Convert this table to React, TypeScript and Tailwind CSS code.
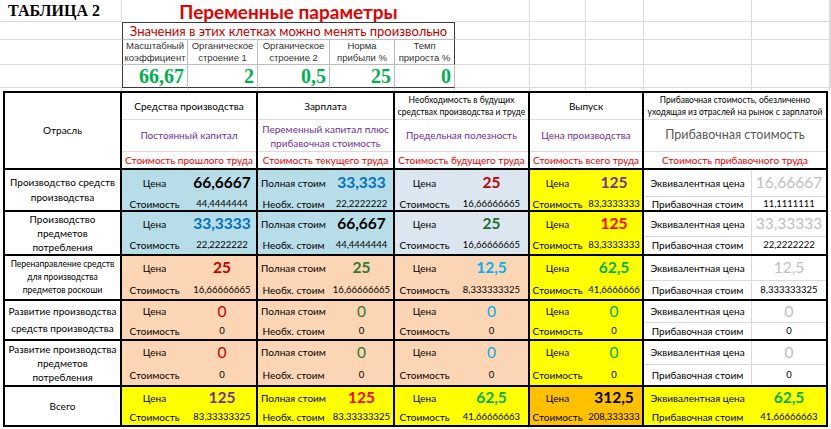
import React from 'react'

type Grp = {
  bg: string
  l1: string
  l2: string
  v1: string
  v1c: string
  v2: string
  lines?: boolean
}

const SPLITS = [
  'grid-cols-[66px_1fr]',
  'grid-cols-[72px_1fr]',
  'grid-cols-[60px_1fr]',
  'grid-cols-[56px_1fr]',
  'grid-cols-[108px_1fr]',
]

const C = 'Цена'
const S = 'Стоимость'
const PS = 'Полная стоим'
const NS = 'Необх. стоим'
const EQ = 'Эквивалентная цена'
const PR = 'Прибавочная стоим'

const BLUE = 'bg-[#b7dee8]'
const PALE = 'bg-[#dce6f1]'
const PEACH = 'bg-[#fcd5b4]'
const YEL = 'bg-[#ffff00]'
const ORG = 'bg-[#ffc000]'
const WHITE = 'bg-white'

const rows: { label: React.ReactNode; labelCls: string; top: string; h: string; groups: Grp[] }[] = [
  {
    label: <>Производство средств<br />производства</>,
    labelCls: 'text-[10px] leading-[15px]',
    top: 'grid-rows-[27px_1fr]',
    h: 'h-[42px]',
    groups: [
      { bg: BLUE, l1: C, l2: S, v1: '66,6667', v1c: 'font-bold text-black', v2: '44,4444444' },
      { bg: BLUE, l1: PS, l2: NS, v1: '33,333', v1c: 'font-bold text-[#0070c0]', v2: '22,2222222' },
      { bg: PALE, l1: C, l2: S, v1: '25', v1c: 'font-bold text-[#c00000]', v2: '16,66666665' },
      { bg: YEL, l1: C, l2: S, v1: '125', v1c: 'font-bold text-[#7030a0]', v2: '83,3333333' },
      { bg: WHITE, l1: EQ, l2: PR, v1: '16,66667', v1c: 'text-[#bfbfbf]', v2: '11,1111111', lines: true },
    ],
  },
  {
    label: <>Производство<br />предметов<br />потребления</>,
    labelCls: 'text-[10px] leading-[14px]',
    top: 'grid-rows-[25px_1fr]',
    h: 'h-[44px]',
    groups: [
      { bg: BLUE, l1: C, l2: S, v1: '33,3333', v1c: 'font-bold text-[#0070c0]', v2: '22,2222222' },
      { bg: BLUE, l1: PS, l2: NS, v1: '66,667', v1c: 'font-bold text-black', v2: '44,4444444' },
      { bg: PALE, l1: C, l2: S, v1: '25', v1c: 'font-bold text-[#1e6b2a]', v2: '16,66666665' },
      { bg: YEL, l1: C, l2: S, v1: '125', v1c: 'font-bold text-[#ff0000]', v2: '83,3333333' },
      { bg: WHITE, l1: EQ, l2: PR, v1: '33,33333', v1c: 'text-[#bfbfbf]', v2: '22,2222222', lines: true },
    ],
  },
  {
    label: <>Перенаправление средств<br />для производства<br />предметов роскоши</>,
    labelCls: 'text-[8.5px] leading-[13px]',
    top: 'grid-rows-[25px_1fr]',
    h: 'h-[45px]',
    groups: [
      { bg: PEACH, l1: C, l2: S, v1: '25', v1c: 'font-bold text-[#c00000]', v2: '16,66666665' },
      { bg: PEACH, l1: PS, l2: NS, v1: '25', v1c: 'font-bold text-[#2f7a2a]', v2: '16,66666665' },
      { bg: PEACH, l1: C, l2: S, v1: '12,5', v1c: 'font-bold text-[#00b0f0]', v2: '8,333333325' },
      { bg: YEL, l1: C, l2: S, v1: '62,5', v1c: 'font-bold text-[#00b050]', v2: '41,6666666' },
      { bg: WHITE, l1: EQ, l2: PR, v1: '12,5', v1c: 'text-[#bfbfbf]', v2: '8,333333325', lines: true },
    ],
  },
  {
    label: <>Развитие производства<br />средств производства</>,
    labelCls: 'text-[10px] leading-[17px]',
    top: 'grid-rows-[22px_1fr]',
    h: 'h-[40px]',
    groups: [
      { bg: PEACH, l1: C, l2: S, v1: '0', v1c: 'text-[#c00000]', v2: '0' },
      { bg: PEACH, l1: PS, l2: NS, v1: '0', v1c: 'text-[#2f7a2a]', v2: '0' },
      { bg: PEACH, l1: C, l2: S, v1: '0', v1c: 'text-[#00b0f0]', v2: '0' },
      { bg: YEL, l1: C, l2: S, v1: '0', v1c: 'text-[#00b050]', v2: '0' },
      { bg: WHITE, l1: EQ, l2: PR, v1: '0', v1c: 'text-[#bfbfbf]', v2: '0', lines: true },
    ],
  },
  {
    label: <>Развитие производства<br />предметов<br />потребления</>,
    labelCls: 'text-[10px] leading-[14px]',
    top: 'grid-rows-[24px_1fr]',
    h: 'h-[46px]',
    groups: [
      { bg: PEACH, l1: C, l2: S, v1: '0', v1c: 'text-[#c00000]', v2: '0' },
      { bg: PEACH, l1: PS, l2: NS, v1: '0', v1c: 'text-[#2f7a2a]', v2: '0' },
      { bg: PEACH, l1: C, l2: S, v1: '0', v1c: 'text-[#00b0f0]', v2: '0' },
      { bg: YEL, l1: C, l2: S, v1: '0', v1c: 'text-[#00b050]', v2: '0' },
      { bg: WHITE, l1: EQ, l2: PR, v1: '0', v1c: 'text-[#bfbfbf]', v2: '0', lines: true },
    ],
  },
  {
    label: 'Всего',
    labelCls: 'text-[10px] leading-[15px]',
    top: 'grid-rows-[23px_1fr]',
    h: 'h-[40px]',
    groups: [
      { bg: YEL, l1: C, l2: S, v1: '125', v1c: 'font-bold text-[#7030a0]', v2: '83,33333325' },
      { bg: YEL, l1: PS, l2: NS, v1: '125', v1c: 'font-bold text-[#ff0000]', v2: '83,33333325' },
      { bg: YEL, l1: C, l2: S, v1: '62,5', v1c: 'font-bold text-[#00b050]', v2: '41,66666663' },
      { bg: ORG, l1: C, l2: S, v1: '312,5', v1c: 'font-bold text-black', v2: '208,333333' },
      { bg: YEL, l1: EQ, l2: PR, v1: '62,5', v1c: 'font-bold text-[#00b050]', v2: '41,66666663' },
    ],
  },
]

const headers: { top: React.ReactNode; topCls: string; mid: React.ReactNode; midCls: string; bot: string }[] = [
  { top: 'Средства производства', topCls: 'text-[10px]', mid: 'Постоянный капитал', midCls: 'text-[10px] text-[#7030a0]', bot: 'Стоимость прошлого труда' },
  { top: 'Зарплата', topCls: 'text-[10px]', mid: <>Переменный капитал плюс<br />прибавочная стоимость</>, midCls: 'text-[10px] leading-[14px] text-[#7030a0]', bot: 'Стоимость текущего труда' },
  { top: <>Необходимость в будущих<br />средствах производства и труде</>, topCls: 'text-[8.5px] leading-[12px]', mid: 'Предельная полезность', midCls: 'text-[10px] text-[#7030a0]', bot: 'Стоимость будущего труда' },
  { top: 'Выпуск', topCls: 'text-[10px]', mid: 'Цена производства', midCls: 'text-[10px] text-[#7030a0]', bot: 'Стоимость всего труда' },
  { top: <>Прибавочная стоимость, обезличенно<br />уходящая из отраслей на рынок с зарплатой</>, topCls: 'text-[8.5px] leading-[12px]', mid: 'Прибавочная стоимость', midCls: 'text-[12.5px] text-[#595959]', bot: 'Стоимость прибавочного труда' },
]

function Group({ g, split, top }: { g: Grp; split: string; top: string }) {
  const line = g.lines ? 'border-[#dadada]' : 'border-transparent'
  return (
    <div className={`grid ${split} ${top} min-h-0 overflow-hidden whitespace-nowrap border-b-2 border-r-2 border-black ${g.bg}`}>
      <div className={`flex items-center justify-center border-b border-r text-[10px] ${line}`}>{g.l1}</div>
      <div className={`flex items-center justify-center border-b text-[15.5px] leading-none ${line} ${g.v1c}`}>{g.v1}</div>
      <div className={`flex items-center justify-center border-r text-[10px] ${line}`}>{g.l2}</div>
      <div className="flex items-center justify-center text-[9.5px]">{g.v2}</div>
    </div>
  )
}

function TopArea() {
  const gl = 'border-b border-r border-[#dadada]'
  const empty = (n: number) => Array.from({ length: n }, (_, i) => <div key={i} className={gl} />)
  return (
    <div className="grid h-[91px] grid-cols-[122px_66px_70px_72px_65px_60px_75px_56px_58px_108px_78px_1px] grid-rows-[22px_18px_25px_23px_3px]">
      <div className={`${gl} flex items-center pl-[8px] font-['Liberation_Serif',serif] text-[16px] font-bold leading-none`}>ТАБЛИЦА 2</div>
      <div className="col-span-5 flex items-center justify-center text-[19px] font-bold leading-none text-[#e60000]">Переменные параметры</div>
      {empty(6)}
      <div className="border-b border-[#dadada]" />
      <div className="col-span-5 flex items-center justify-center border border-b-[#bdbdbd] border-[#3a3a3a] text-[13px] leading-none text-[#c00000]">
        Значения в этих клетках можно менять произвольно
      </div>
      {empty(6)}
      <div className="border-b border-[#dadada]" />
      {[
        ['Масштабный', 'коэффициент'],
        ['Органическое', 'строение 1'],
        ['Органическое', 'строение 2'],
        ['Норма', 'прибыли %'],
        ['Темп', 'прироста %'],
      ].map(([a, b], i) => (
        <div
          key={i}
          className={`flex flex-col items-center justify-center border-b border-r border-[#bdbdbd] font-['Liberation_Sans',sans-serif] text-[9.5px] leading-[12px] text-[#333] ${i === 0 ? 'border-l border-l-[#3a3a3a]' : ''} ${i === 4 ? 'border-r-[#3a3a3a]' : ''}`}
        >
          <span>{a}</span>
          <span>{b}</span>
        </div>
      ))}
      {empty(6)}
      <div className="border-b border-[#dadada]" />
      {['66,67', '2', '0,5', '25', '0'].map((v, i) => (
        <div
          key={i}
          className={`flex items-center justify-end border-b border-r border-b-[#3a3a3a] border-r-[#bdbdbd] pr-[3px] font-['Liberation_Serif',serif] text-[20px] font-bold leading-none text-[#00b050] ${i === 0 ? 'border-l border-l-[#3a3a3a]' : ''} ${i === 4 ? 'border-r-[#3a3a3a]' : ''}`}
        >
          {v}
        </div>
      ))}
      {empty(6)}
      <div className="border-r border-[#dadada]" />
      <div className="border-r border-[#dadada]" />
      <div className="border-r border-[#dadada]" />
      <div className="border-r border-[#dadada]" />
      <div className="border-r border-[#dadada]" />
      <div className="border-r border-[#dadada]" />
      <div className="border-r border-[#dadada]" />
      <div className="border-r border-[#dadada]" />
      <div className="border-r border-[#dadada]" />
      <div className="border-r border-[#dadada]" />
      <div className="border-r border-[#dadada]" />
      <div />
    </div>
  )
}

function MainTable() {
  return (
    <div className="ml-[3px] w-[825px] border-l-2 border-t-2 border-black">
      <div className="grid h-[77px] grid-cols-[117px_136px_137px_135px_114px_184px]">
        <div className="flex items-center justify-center border-b-2 border-r-2 border-black text-[10px]">Отрасль</div>
        {headers.map((h, i) => (
          <div key={i} className="grid grid-rows-[27px_32px_1fr] overflow-hidden whitespace-nowrap border-b-2 border-r-2 border-black text-center">
            <div className={`flex items-center justify-center border-b border-[#dadada] ${h.topCls}`}>{h.top}</div>
            <div className={`flex items-center justify-center border-b border-[#dadada] ${h.midCls}`}>{h.mid}</div>
            <div className="flex items-center justify-center text-[10px] text-[#ee0000]">{h.bot}</div>
          </div>
        ))}
      </div>
      {rows.map((r, ri) => (
        <div key={ri} className={`grid ${r.h} grid-cols-[117px_136px_137px_135px_114px_184px]`}>
          <div className={`flex items-center justify-center overflow-hidden whitespace-nowrap border-b-2 border-r-2 border-black bg-white text-center ${r.labelCls}`}>
            <span>{r.label}</span>
          </div>
          {r.groups.map((g, gi) => (
            <Group key={gi} g={g} split={SPLITS[gi]} top={r.top} />
          ))}
        </div>
      ))}
    </div>
  )
}

export default function App() {
  return (
    <div className="h-[429px] w-[831px] overflow-hidden bg-white font-[Lato,sans-serif] text-black">
      <TopArea />
      <MainTable />
    </div>
  )
}
